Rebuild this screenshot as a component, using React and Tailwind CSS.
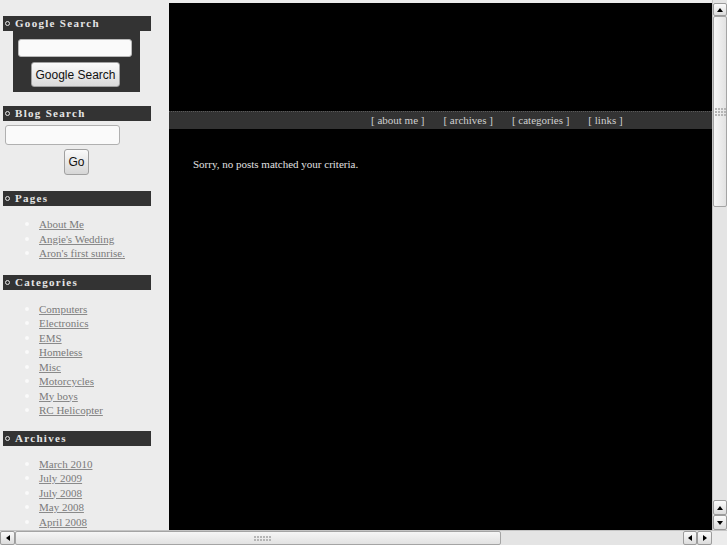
import React from 'react';

const PAGES = ['About Me', "Angie's Wedding", "Aron's first sunrise."];
const CATEGORIES = ['Computers', 'Electronics', 'EMS', 'Homeless', 'Misc', 'Motorcycles', 'My boys', 'RC Helicopter'];
const ARCHIVES = ['March 2010', 'July 2009', 'July 2008', 'May 2008', 'April 2008'];
const NAV = ['[ about me ]', '[ archives ]', '[ categories ]', '[ links ]'];

function WidgetTitle({ children, className = '' }) {
  return (
    <div className={`w-[148px] h-[15px] shrink-0 bg-[#333333] flex items-center ${className}`}>
      {/* ring bullet */}
      <span className="ml-[2px] w-[5px] h-[5px] rounded-full border border-[#e8e8e8]" />
      <span className="ml-[5px] text-[11px] font-bold tracking-[1.3px] text-[#e6e6e6] leading-none">
        {children}
      </span>
    </div>
  );
}

function LinkList({ items, className = '' }) {
  return (
    <ul className={`leading-[14.5px] text-[11px] ${className}`}>
      {items.map((t) => (
        <li key={t} className="flex items-center h-[14.5px] whitespace-nowrap">
          <span className="ml-[22px] w-[4px] h-[4px] rounded-full bg-[#fafafa]" />
          <a className="ml-[10px] text-[#7a7a7a] underline decoration-[#8a8a8a]">{t}</a>
        </li>
      ))}
    </ul>
  );
}

function Arrow({ dir }) {
  if (dir === 'up')
    return <span className="w-0 h-0 border-l-[3.5px] border-r-[3.5px] border-b-[4px] border-l-transparent border-r-transparent border-b-black" />;
  if (dir === 'down')
    return <span className="w-0 h-0 border-l-[3.5px] border-r-[3.5px] border-t-[4px] border-l-transparent border-r-transparent border-t-black" />;
  if (dir === 'left')
    return <span className="w-0 h-0 border-t-[3.5px] border-b-[3.5px] border-r-[4px] border-t-transparent border-b-transparent border-r-black" />;
  return <span className="w-0 h-0 border-t-[3.5px] border-b-[3.5px] border-l-[4px] border-t-transparent border-b-transparent border-l-black" />;
}

function SbButton({ dir, className = '' }) {
  return (
    <div className={`shrink-0 flex items-center justify-center border border-[#9c9c9c] rounded-[2px] bg-gradient-to-b from-[#fbfbfb] to-[#dcdcdc] ${className}`}>
      <Arrow dir={dir} />
    </div>
  );
}

function Grip({ cols }) {
  return (
    <div className={`grid gap-[1px] ${cols === 6 ? 'grid-cols-6' : 'grid-cols-4'}`}>
      {Array.from({ length: 12 }).map((_, i) => (
        <span key={i} className="w-[2px] h-[2px] bg-[#b5b5b5]" />
      ))}
    </div>
  );
}

export default function App() {
  return (
    <div className="w-[727px] h-[545px] flex flex-col overflow-hidden bg-[#ececec] font-['Liberation_Serif',serif]">
      <div className="flex h-[530px] shrink-0">
        {/* sidebar */}
        <aside className="w-[169px] shrink-0 overflow-hidden pt-[16px] pl-[3px] flex flex-col">
          <WidgetTitle>Google Search</WidgetTitle>
          <div className="ml-[10px] w-[127px] h-[61px] shrink-0 bg-[#333333] flex flex-col">
            <div className="ml-[5px] mt-[8px] w-[114px] h-[18px] rounded-[3px] border border-[#b8b8b8] bg-[#fafafa]" />
            <button className="ml-[18px] mt-[5px] w-[89px] h-[25px] rounded-[3px] border border-[#a0a0a0] bg-gradient-to-b from-[#fafafa] to-[#dadada] text-[12px] text-[#111] font-['Liberation_Sans',sans-serif]">
              Google Search
            </button>
          </div>

          <WidgetTitle className="mt-[14px]">Blog Search</WidgetTitle>
          <div className="ml-[2px] mt-[4px] w-[115px] h-[20px] shrink-0 rounded-[3px] border border-[#b0b0b0] bg-[#fafafa]" />
          <button className="ml-[61px] mt-[4px] w-[25px] h-[26px] shrink-0 rounded-[3px] border border-[#a0a0a0] bg-gradient-to-b from-[#fafafa] to-[#d6d6d6] text-[12px] text-[#111] font-['Liberation_Sans',sans-serif]">
            Go
          </button>

          <WidgetTitle className="mt-[16px]">Pages</WidgetTitle>
          <LinkList items={PAGES} className="mt-[11px]" />

          <WidgetTitle className="mt-[14px]">Categories</WidgetTitle>
          <LinkList items={CATEGORIES} className="mt-[12px]" />

          <WidgetTitle className="mt-[13px]">Archives</WidgetTitle>
          <LinkList items={ARCHIVES} className="mt-[11px]" />
        </aside>

        {/* main column */}
        <main className="w-[543px] shrink-0 mt-[3px] bg-black flex flex-col">
          <div className="h-[108px] shrink-0" />
          <nav className="h-[18px] shrink-0 bg-[#333333] border-t border-dotted border-[#5a5a5a] flex items-center pl-[202px] gap-[19px] text-[11px] text-[#d0d0d0] whitespace-pre">
            {NAV.map((n) => (
              <a key={n}>{n}</a>
            ))}
          </nav>
          <p className="ml-[24px] mt-[27px] text-[11px] text-[#e0e0e0]">Sorry, no posts matched your criteria.</p>
        </main>

        {/* vertical scrollbar */}
        <div className="w-[15px] shrink-0 flex flex-col bg-[#e4e4e4] border-l border-[#c4c4c4] pt-[3px]">
          <SbButton dir="up" className="h-[13px]" />
          <div className="h-[191px] shrink-0 border border-[#a4a4a4] rounded-[2px] bg-gradient-to-r from-[#f6f6f6] to-[#e2e2e2] flex items-center justify-center">
            <Grip cols={4} />
          </div>
          <div className="flex-1" />
          <SbButton dir="up" className="h-[15px]" />
          <SbButton dir="down" className="h-[15px]" />
        </div>
      </div>

      {/* horizontal scrollbar */}
      <div className="h-[15px] shrink-0 flex bg-[#e4e4e4] border-t border-[#c4c4c4]">
        <SbButton dir="left" className="w-[15px]" />
        <div className="w-[486px] shrink-0 border border-[#a4a4a4] rounded-[2px] bg-gradient-to-b from-[#f6f6f6] to-[#e2e2e2] flex items-center justify-end pr-[229px]">
          <Grip cols={6} />
        </div>
        <div className="flex-1" />
        <SbButton dir="left" className="w-[14px]" />
        <SbButton dir="right" className="w-[15px]" />
        <div className="w-[15px] shrink-0 bg-[#ececec]" />
      </div>
    </div>
  );
}
